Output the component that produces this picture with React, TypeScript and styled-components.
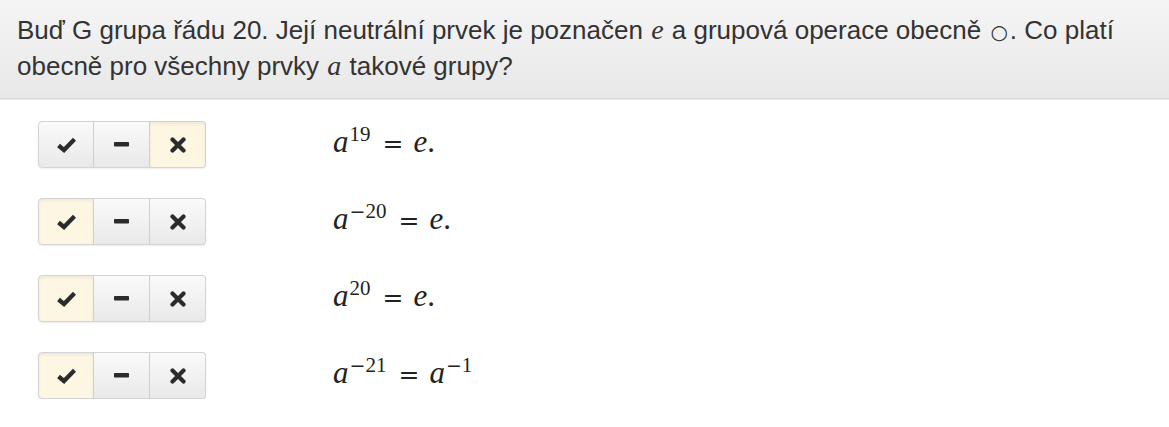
import React from "react";
import styled, { createGlobalStyle } from "styled-components";

const Global = createGlobalStyle`
  html, body { margin: 0; padding: 0; background: #fff; }
  body { font-family: "Liberation Sans", Arial, sans-serif; color: #333; }
`;

const Header = styled.div`
  background: linear-gradient(to bottom, #f5f5f5 0%, #e8e8e8 100%);
  border-bottom: 1px solid #d6d6d6;
  box-shadow: 0 1px 0 #ececec;
  padding: 12px 36px 12px 17px;
  height: 74px;
  font-family: "Liberation Sans", Arial, sans-serif;
  font-size: 26px;
  line-height: 36px;
  color: #333;
`;

const MathI = styled.span`
  font-family: "Liberation Serif", "DejaVu Serif", serif;
  font-style: italic;
  font-size: 28px;
  line-height: 1;
  margin: 0 1px;
`;

const Circ = styled.span`
  font-family: "DejaVu Sans", sans-serif;
  font-size: 20px;
  line-height: 1;
  margin: 0 2px;
`;

const List = styled.div`
  display: flex;
  flex-direction: column;
  gap: 30px;
  padding: 22px 0 0 38px;
`;

const Row = styled.div`
  display: flex;
  align-items: center;
`;

const Group = styled.div`
  display: flex;
  border-radius: 4px;
  box-shadow: 0 1px 2px rgba(0, 0, 0, 0.08);
`;

const Btn = styled.div<{ $active?: boolean; $first?: boolean; $last?: boolean }>`
  box-sizing: border-box;
  width: ${(p) => (p.$first ? "56px" : "57px")};
  height: 47px;
  display: flex;
  align-items: center;
  justify-content: center;
  color: #2b2b2b;
  border: 1px solid #d4d4d4;
  border-left: ${(p) => (p.$first ? "1px solid #d4d4d4" : "1px solid #cfcfcf")};
  margin-left: ${(p) => (p.$first ? "0" : "-1px")};
  border-radius: ${(p) =>
    p.$first ? "4px 0 0 4px" : p.$last ? "0 4px 4px 0" : "0"};
  background: ${(p) =>
    p.$active
      ? "#fcf6e3"
      : "linear-gradient(to bottom, #fafafa 0%, #e9e9e9 100%)"};
  box-shadow: ${(p) =>
    p.$active ? "inset 0 2px 3px rgba(0,0,0,0.06)" : "none"};
`;

const Formula = styled.div`
  margin-left: 127px;
  font-family: "Liberation Serif", "DejaVu Serif", serif;
  font-size: 31px;
  color: #222;
  white-space: nowrap;
  position: relative;
  top: -3px;
`;

const V = styled.span`
  font-style: italic;
`;

const Sup = styled.sup`
  font-size: 21px;
  font-style: normal;
  vertical-align: 11px;
  line-height: 0;
  margin-left: 1px;
`;

const Minus = styled.span`
  font-family: "DejaVu Serif", serif;
  font-size: 19px;
`;

const Eq = styled.span`
  font-family: "DejaVu Serif", serif;
  font-size: 25px;
  margin: 0 10px 0 12px;
`;

const CheckIcon = () => (
  <svg width="19" height="16" viewBox="0 0 19 16">
    <polyline
      points="1.5,8.5 7,13 17.5,2.2"
      fill="none"
      stroke="#2b2b2b"
      strokeWidth="4.3"
      strokeLinejoin="miter"
    />
  </svg>
);

const MinusIcon = () => (
  <svg width="15" height="5" viewBox="0 0 15 5">
    <rect x="0" y="0" width="15" height="4.6" rx="0.8" fill="#2b2b2b" />
  </svg>
);

const TimesIcon = () => (
  <svg width="16" height="16" viewBox="0 0 16 16">
    <path
      d="M2.5 2.5 L13.5 13.5 M13.5 2.5 L2.5 13.5"
      stroke="#2b2b2b"
      strokeWidth="4.2"
      strokeLinecap="round"
    />
  </svg>
);

type Item = { active: number; f: React.ReactNode };

const items: Item[] = [
  {
    active: 2,
    f: (
      <>
        <V>a</V>
        <Sup>19</Sup>
        <Eq>=</Eq>
        <V>e</V>.
      </>
    ),
  },
  {
    active: 0,
    f: (
      <>
        <V>a</V>
        <Sup>
          <Minus>−</Minus>20
        </Sup>
        <Eq>=</Eq>
        <V>e</V>.
      </>
    ),
  },
  {
    active: 0,
    f: (
      <>
        <V>a</V>
        <Sup>20</Sup>
        <Eq>=</Eq>
        <V>e</V>.
      </>
    ),
  },
  {
    active: 0,
    f: (
      <>
        <V>a</V>
        <Sup>
          <Minus>−</Minus>21
        </Sup>
        <Eq>=</Eq>
        <V>a</V>
        <Sup>
          <Minus>−</Minus>1
        </Sup>
      </>
    ),
  },
];

export default function App() {
  return (
    <>
      <Global />
      <Header>
        Buď G grupa řádu 20. Její neutrální prvek je poznačen <MathI>e</MathI> a
        grupová operace obecně <Circ>○</Circ>. Co platí obecně pro všechny prvky{" "}
        <MathI>a</MathI> takové grupy?
      </Header>
      <List>
        {items.map((it, i) => (
          <Row key={i}>
            <Group>
              <Btn $first $active={it.active === 0}>
                <CheckIcon />
              </Btn>
              <Btn $active={it.active === 1}>
                <MinusIcon />
              </Btn>
              <Btn $last $active={it.active === 2}>
                <TimesIcon />
              </Btn>
            </Group>
            <Formula>{it.f}</Formula>
          </Row>
        ))}
      </List>
    </>
  );
}
